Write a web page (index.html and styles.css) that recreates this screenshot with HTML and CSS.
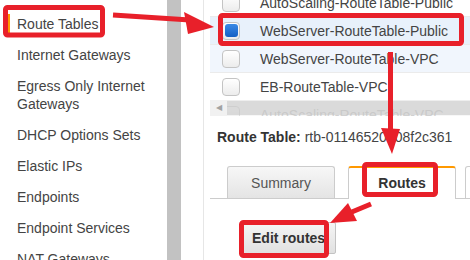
FILE: index.html
```html
<!doctype html>
<html>
<head>
    <meta charset="utf-8">
    <title>Route Tables</title>
    <link rel="stylesheet" href="styles.css">
</head>
<body>

<div class="page">
    <nav class="sidebar">
        <a class="nav-item active">Route Tables</a>
        <a class="nav-item">Internet Gateways</a>
        <a class="nav-item">Egress Only Internet Gateways</a>
        <a class="nav-item">DHCP Options Sets</a>
        <a class="nav-item">Elastic IPs</a>
        <a class="nav-item">Endpoints</a>
        <a class="nav-item">Endpoint Services</a>
        <a class="nav-item">NAT Gateways</a>
    </nav>
    <div class="splitter"></div>

    <main class="content">
        <div class="grid">
            <div class="rows">
                <div class="row"><span class="check"></span>AutoScaling-RouteTable-Public</div>
                <div class="row selected"><span class="check checked"></span>WebServer-RouteTable-Public</div>
                <div class="row hover"><span class="check"></span>WebServer-RouteTable-VPC</div>
                <div class="row"><span class="check"></span>EB-RouteTable-VPC</div>
                <div class="row faded"><span class="check"></span>AutoScaling-RouteTable-VPC</div>
            </div>
            <div class="hscroll">
                <span class="hscroll-btn">&#9664;</span>
                <span class="hscroll-thumb"></span>
            </div>
        </div>

        <div class="detail-title"><b>Route Table:</b> rtb-01146520a08f2c361</div>

        <div class="tabs">
            <div class="tab">Summary</div>
            <div class="tab active">Routes</div>
            <div class="tab"></div>
        </div>

        <button class="btn">Edit routes</button>
    </main>

    <svg class="marks" width="470" height="260" viewBox="0 0 470 260">
        <g fill="none" stroke="#e8202a" stroke-width="5">
            <rect x="5.5" y="7.5" width="97" height="27.5" rx="2"/>
            <rect x="220.5" y="15.5" width="241" height="28" rx="2"/>
            <rect x="364.5" y="164.5" width="71" height="30" rx="2"/>
            <rect x="241.5" y="222.5" width="85" height="33" rx="2"/>
            <line x1="113" y1="15" x2="190" y2="20"/>
            <line x1="390.5" y1="52" x2="390.5" y2="132"/>
            <line x1="371" y1="204" x2="347" y2="214"/>
        </g>
        <g fill="#e8202a">
            <polygon points="184,12 214,27 188,34"/>
            <polygon points="381,128 400,129 392,154"/>
            <polygon points="330,223 348,203 357,221"/>
        </g>
    </svg>
</div>

</body>
</html>
```

FILE: styles.css
```css
html { font-family: "Liberation Sans", Arial, sans-serif; font-size: 14px; color: #444; }
body { margin: 0; }

.page {
    position: relative;
    display: flex;
    width: 470px; height: 260px;
    overflow: hidden;
}

.sidebar {
    flex: none;
    width: 167px;
    padding-top: 8.5px;
    display: flex; flex-direction: column;
}
.nav-item {
    display: block;
    margin-left: 8px;
    padding: 6.5px 0 6.5px 9px;
    line-height: 18px;
    width: 130px;
}
.nav-item.active {
    background: linear-gradient(#f90, #f90) no-repeat 0 50% / 2px 21px;
}

.splitter { flex: none; width: 14px; background: #c2c2c2; }

.content {
    flex: 1; min-width: 0;
    margin-left: 22px;
    padding-left: 6px;
    border-left: 1px solid #e6e6e6;
    display: flex; flex-direction: column; align-items: flex-start;
}

.grid {
    position: relative;
    align-self: stretch;
    height: 116px;
    overflow: hidden;
}
.rows { margin-top: -11px; width: 400px; }
.row {
    box-sizing: border-box;
    height: 28px;
    display: flex; align-items: center;
    white-space: nowrap;
    border-bottom: 1px solid #ebebeb;
}
.row.selected { background: #e8f1fb; }
.row.hover { background: #f1f6fd; }
.row.faded { color: #aaa; }

.check {
    flex: none;
    box-sizing: border-box;
    width: 18px; height: 18px;
    margin: 0 20px 0 12px;
    border: 1px solid #c4c4c4;
    border-radius: 4px;
    background: linear-gradient(#fff, #ececec);
    display: flex; align-items: center; justify-content: center;
}
.check.checked::after {
    content: "";
    width: 13px; height: 13px;
    border-radius: 3px;
    background: linear-gradient(#3a8ae6, #1560c4);
}

.hscroll {
    position: absolute; left: 0; right: 0; bottom: 0;
    height: 16px;
    display: flex;
    background: rgba(241, 241, 241, 0.55);
}
.hscroll-btn {
    width: 17px;
    font-size: 8px; line-height: 16px;
    color: #a3a3a3;
    text-align: center;
    background: #f1f1f1;
}
.hscroll-thumb { flex: 1; margin: 1px 0; background: rgba(195, 195, 195, 0.55); }

.detail-title {
    margin-top: 12px;
    padding-left: 7px;
    line-height: 18px;
    white-space: nowrap;
}
.detail-title b { color: #333; }

.tabs {
    align-self: stretch;
    margin-top: 20px;
    height: 32px;
    display: flex; align-items: flex-end;
    border-bottom: 1px solid #ccc;
}
.tab {
    flex: none;
    box-sizing: border-box;
    width: 108px; height: 32px;
    margin-left: 13px;
    border: 1px solid #ccc; border-bottom: none;
    border-radius: 3px 3px 0 0;
    background: linear-gradient(#f7f7f7, #e4e4e4);
    color: #555;
    text-align: center; line-height: 32px;
}
.tab:first-child { margin-left: 17px; }
.tab.active {
    margin-bottom: -1px; height: 33px;
    border-top: 2px solid #f90;
    background: #fff;
    color: #333; font-weight: bold;
    line-height: 31px;
}
.tab:last-child { margin-left: 9px; background: #fff; }

.btn {
    margin: 23px 0 0 32px;
    height: 32px;
    padding: 0 10px 0 9px;
    font: bold 14px "Liberation Sans", Arial, sans-serif;
    color: #333;
    border: 1px solid #c3c3c3;
    border-radius: 2px;
    background: linear-gradient(#f5f5f5, #e1e1e1);
}

.marks { position: absolute; top: 0; left: 0; pointer-events: none; }
```
